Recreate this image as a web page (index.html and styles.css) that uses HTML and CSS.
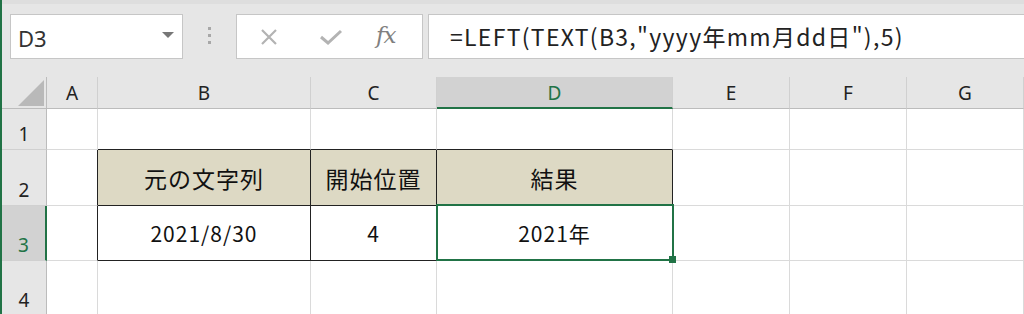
FILE: index.html
```html
<!DOCTYPE html>
<html lang="ja">
<head>
  <meta charset="UTF-8" />
  <title>LEFT TEXT</title>
  <link rel="stylesheet" href="styles.css">
</head>
<body>
  <div class="app">
    <div class="toolbar">
      <div class="namebox">
        <span class="name">D3</span>
        <svg class="caret" width="12" height="6" viewBox="0 0 12 6"><path d="M0 0H12L6 6Z" fill="#777"/></svg>
      </div>
      <div class="grip"><i></i><i></i><i></i></div>
      <div class="fxbox">
        <svg class="icon" width="18" height="18" viewBox="0 0 18 18"><path d="M2 2L16 16M16 2L2 16" stroke="#b3b3b3" stroke-width="2.2" fill="none"/></svg>
        <svg class="icon" width="24" height="18" viewBox="0 0 24 18"><path d="M2 9L9 15L22 3" stroke="#b3b3b3" stroke-width="3" fill="none"/></svg>
        <span class="fx">fx</span>
      </div>
      <div class="formula">=LEFT(TEXT(B3,"yyyy年mm月dd日"),5)</div>
    </div>

    <div class="sheet">
      <div class="cell ch corner"><span class="tri"></span></div>
      <div class="cell ch">A</div>
      <div class="cell ch">B</div>
      <div class="cell ch">C</div>
      <div class="cell ch active">D</div>
      <div class="cell ch">E</div>
      <div class="cell ch">F</div>
      <div class="cell ch">G</div>

      <div class="cell rh">1</div>
      <div class="cell"></div>
      <div class="cell above"></div>
      <div class="cell above"></div>
      <div class="cell above"></div>
      <div class="cell"></div>
      <div class="cell"></div>
      <div class="cell"></div>

      <div class="cell rh">2</div>
      <div class="cell left-of"></div>
      <div class="cell tbl head">元の文字列</div>
      <div class="cell tbl head">開始位置</div>
      <div class="cell tbl head">結果</div>
      <div class="cell"></div>
      <div class="cell"></div>
      <div class="cell"></div>

      <div class="cell rh active">3</div>
      <div class="cell left-of"></div>
      <div class="cell tbl">2021/8/30</div>
      <div class="cell tbl">4</div>
      <div class="cell tbl selected">2021年<span class="sel"><span class="handle"></span></span></div>
      <div class="cell"></div>
      <div class="cell"></div>
      <div class="cell"></div>

      <div class="cell rh">4</div>
      <div class="cell"></div>
      <div class="cell"></div>
      <div class="cell"></div>
      <div class="cell"></div>
      <div class="cell"></div>
      <div class="cell"></div>
      <div class="cell"></div>
    </div>
  </div>
</body>
</html>
```

FILE: styles.css
```css
:root {
  --green: #217346;
  --toolbar: #e6e6e6;
  --box-border: #c6c6c6;
  --grid: #dadada;
  --tan: #ddd9c4;
  --font: "Noto Sans", "Noto Sans CJK JP", sans-serif;
  --cjk: "Noto Sans CJK JP", sans-serif;
}

* {
  box-sizing: border-box;
}

body {
  margin: 0;
  width: 1024px;
  height: 314px;
  overflow: hidden;
  background: var(--toolbar);
  font-family: var(--font);
}

.app {
  border-left: 2px solid var(--green);
  height: 314px;
}

/* formula bar */
.toolbar {
  height: 77px;
  border-top: 4px solid #dedede;
  padding: 10px 0 0 8px;
  display: flex;
  align-items: flex-start;
}

.namebox {
  width: 173px;
  height: 45px;
  background: #fff;
  border: 1px solid var(--box-border);
  display: flex;
  align-items: center;
  justify-content: space-between;
  padding: 0 8px 0 7px;
}

.name {
  font-size: 22px;
  color: #333;
  line-height: 1;
  padding-top: 2px;
}

.caret {
  margin-top: -3px;
}

.grip {
  width: 53px;
  height: 45px;
  display: flex;
  flex-direction: column;
  align-items: center;
  justify-content: center;
  gap: 4px;
  padding-bottom: 2px;
}

.grip i {
  display: block;
  width: 3px;
  height: 3px;
  background: #a8a8a8;
}

.fxbox {
  width: 187px;
  height: 45px;
  background: #fff;
  border: 1px solid var(--box-border);
  display: flex;
  align-items: center;
  padding-left: 23px;
}

.fxbox .icon:first-child {
  margin-right: 41px;
}

.fxbox .icon:nth-child(2) {
  margin-right: 33px;
}

.fx {
  font-family: "DejaVu Serif", serif;
  font-style: italic;
  font-size: 23px;
  color: #808080;
  letter-spacing: -1px;
  margin-top: -3px;
}

.formula {
  flex: 1;
  height: 45px;
  margin-left: 5px;
  margin-right: -2px;
  background: #fff;
  border: 1px solid var(--box-border);
  font-family: var(--cjk);
  font-size: 23px;
  letter-spacing: 1.3px;
  color: #222;
  padding: 4px 0 0 21px;
  white-space: nowrap;
}

/* sheet */
.sheet {
  display: grid;
  grid-template-columns: 45px 51px 213px 126px 236px 117px 117px 117px;
  grid-template-rows: 32px 41px 56px 55px 55px;
  background: #fff;
}

.cell {
  border-right: 1px solid var(--grid);
  border-bottom: 1px solid var(--grid);
  display: flex;
  align-items: center;
  justify-content: center;
  font-family: var(--cjk);
  font-size: 21px;
  color: #111;
  position: relative;
}

.ch {
  background: var(--toolbar);
  border-right-color: #d0d0d0;
  border-bottom: 1px solid #bcbcbc;
  font-family: var(--font);
  font-size: 19px;
  color: #222;
  padding-top: 1px;
}

.ch.active {
  background: #d2d2d2;
  color: var(--green);
  border-bottom: 2px solid var(--green);
}

.corner {
  border-right-color: #bcbcbc;
}

.tri {
  position: absolute;
  right: 2px;
  bottom: 2px;
  width: 26px;
  height: 26px;
  background: #b9b9b9;
  clip-path: polygon(100% 0, 100% 100%, 0 100%);
}

.rh {
  background: var(--toolbar);
  border-right-color: #bcbcbc;
  border-bottom-color: #d0d0d0;
  align-items: flex-end;
  font-family: var(--font);
  font-size: 19px;
  color: #222;
  line-height: 1;
  padding-bottom: 5px;
}

.rh.active {
  background: #d2d2d2;
  color: var(--green);
  border-right: 2px solid var(--green);
}

.above {
  border-bottom-color: #222;
}

.left-of {
  border-right-color: #222;
}

.tbl {
  border-right-color: #222;
  border-bottom-color: #222;
  letter-spacing: 1px;
}

.tbl.head {
  background: var(--tan);
  font-size: 23px;
  letter-spacing: 1px;
}

.sel {
  position: absolute;
  left: -1px;
  top: -2px;
  right: -2px;
  bottom: -1px;
  border: 2px solid var(--green);
  z-index: 2;
}

.handle {
  position: absolute;
  right: -4px;
  bottom: -4px;
  width: 7px;
  height: 7px;
  background: var(--green);
}
```
